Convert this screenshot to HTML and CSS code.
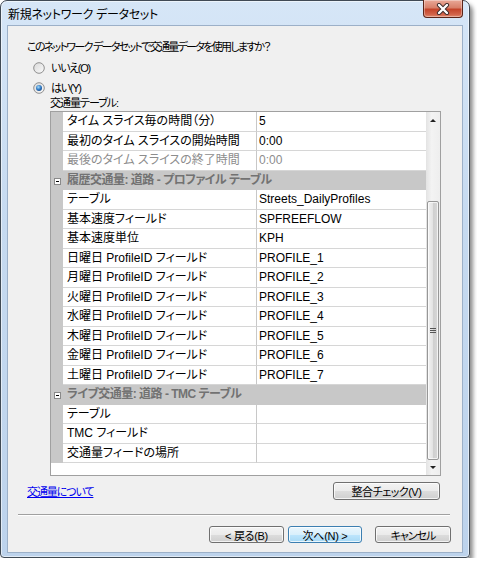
FILE: index.html
```html
<!DOCTYPE html>
<html>
<head>
<meta charset="utf-8">
<link rel="stylesheet" href="styles.css">
</head>
<body>
<div class="window">
  <div class="titlebar">
    <span class="title">新規ネットワーク データセット</span>
    <div class="close">
      <svg width="16" height="12" viewBox="0 0 16 12">
        <path d="M4 2 L12 10 M12 2 L4 10" stroke="#3a2a2a" stroke-width="4.2" stroke-linecap="round"/>
        <path d="M4 2 L12 10 M12 2 L4 10" stroke="#ffffff" stroke-width="2.4" stroke-linecap="round"/>
      </svg>
    </div>
  </div>
  <div class="client">
    <div class="question">このネットワーク データセットで交通量データを使用しますか？</div>
    <div class="radio">
      <svg width="12" height="12" viewBox="0 0 12 12">
        <defs><linearGradient id="rg1" x1="0" y1="0" x2="1" y2="1"><stop offset="0" stop-color="#d8d8d8"/><stop offset="1" stop-color="#fbfbfb"/></linearGradient></defs>
        <circle cx="6" cy="6" r="5.3" fill="url(#rg1)" stroke="#8f8f8f"/>
      </svg>
      <span>いいえ(O)</span>
    </div>
    <div class="radio r2">
      <svg width="12" height="12" viewBox="0 0 12 12">
        <defs>
          <linearGradient id="rg2" x1="0" y1="0" x2="1" y2="1"><stop offset="0" stop-color="#d8d8d8"/><stop offset="1" stop-color="#fbfbfb"/></linearGradient>
          <radialGradient id="dot" cx="0.4" cy="0.35" r="0.7"><stop offset="0" stop-color="#a8dcf8"/><stop offset="0.6" stop-color="#2f79c4"/><stop offset="1" stop-color="#1c4f8e"/></radialGradient>
        </defs>
        <circle cx="6" cy="6" r="5.3" fill="url(#rg2)" stroke="#8f8f8f"/>
        <circle cx="6" cy="6" r="3" fill="url(#dot)"/>
      </svg>
      <span>はい(Y)</span>
    </div>
    <div class="label">交通量テーブル:</div>
    <div class="grid">
      <div class="rows">
        <div class="row"><div class="mg"></div><div class="name">タイム スライス毎の時間（分）</div><div class="value">5</div></div>
        <div class="row"><div class="mg"></div><div class="name">最初のタイム スライスの開始時間</div><div class="value">0:00</div></div>
        <div class="row dis"><div class="mg"></div><div class="name">最後のタイム スライスの終了時間</div><div class="value">0:00</div></div>
        <div class="row cat"><div class="mg"><span class="exp"></span></div><div class="catname">履歴交通量: 道路 - プロファイル テーブル</div></div>
        <div class="row"><div class="mg"></div><div class="name">テーブル</div><div class="value">Streets_DailyProfiles</div></div>
        <div class="row"><div class="mg"></div><div class="name">基本速度フィールド</div><div class="value">SPFREEFLOW</div></div>
        <div class="row"><div class="mg"></div><div class="name">基本速度単位</div><div class="value">KPH</div></div>
        <div class="row"><div class="mg"></div><div class="name">日曜日 ProfileID フィールド</div><div class="value">PROFILE_1</div></div>
        <div class="row"><div class="mg"></div><div class="name">月曜日 ProfileID フィールド</div><div class="value">PROFILE_2</div></div>
        <div class="row"><div class="mg"></div><div class="name">火曜日 ProfileID フィールド</div><div class="value">PROFILE_3</div></div>
        <div class="row"><div class="mg"></div><div class="name">水曜日 ProfileID フィールド</div><div class="value">PROFILE_4</div></div>
        <div class="row"><div class="mg"></div><div class="name">木曜日 ProfileID フィールド</div><div class="value">PROFILE_5</div></div>
        <div class="row"><div class="mg"></div><div class="name">金曜日 ProfileID フィールド</div><div class="value">PROFILE_6</div></div>
        <div class="row"><div class="mg"></div><div class="name">土曜日 ProfileID フィールド</div><div class="value">PROFILE_7</div></div>
        <div class="row cat"><div class="mg"><span class="exp"></span></div><div class="catname">ライブ交通量: 道路 - TMC テーブル</div></div>
        <div class="row"><div class="mg"></div><div class="name">テーブル</div><div class="value"></div></div>
        <div class="row"><div class="mg"></div><div class="name">TMC フィールド</div><div class="value"></div></div>
        <div class="row"><div class="mg"></div><div class="name">交通量フィードの場所</div><div class="value"></div></div>
      </div>
      <div class="scroll">
        <div class="arrow up"><span class="tri-up"></span></div>
        <div class="track t1"></div>
        <div class="thumb"><span class="grip"></span></div>
        <div class="arrow down"><span class="tri-down"></span></div>
      </div>
    </div>
    <div class="midrow">
      <a class="link" href="#">交通量について</a>
      <div class="btn check">整合チェック(V)</div>
    </div>
    <div class="sep"></div>
    <div class="btnrow">
      <div class="btn back">&lt; 戻る(B)</div>
      <div class="btn next default">次へ(N) &gt;</div>
      <div class="btn cancel">キャンセル</div>
    </div>
  </div>
</div>
</body>
</html>
```
FILE: styles.css
```css
html, body {
  margin: 0;
  padding: 0;
  background: #ffffff;
}
body {
  font-family: "Liberation Sans", "Noto Sans CJK JP", sans-serif;
  font-size: 12px;
  font-feature-settings: "palt";
  color: #000;
}
.window {
  width: 470px;
  height: 558px;
  box-sizing: border-box;
  border: 1px solid #404a55;
  border-radius: 7px 7px 4px 4px;
  background: linear-gradient(to bottom, #d6e6f7 0%, #c6daf0 40%, #bdd3ec 100%);
  box-shadow: 3px 4px 4px rgba(0,0,0,0.45), inset 0 0 0 1px rgba(255,255,255,0.55);
  padding: 0 6px 4px 6px;
  display: flex;
  flex-direction: column;
}
.titlebar {
  height: 24px;
  display: flex;
  align-items: center;
  padding-left: 1px;
}
.title {
  font-size: 12px;
  color: #000;
  letter-spacing: -0.3px;
}
.close {
  margin-left: auto;
  align-self: flex-start;
  margin-top: -1px;
  width: 40px;
  height: 18px;
  box-sizing: border-box;
  border: 1px solid #5a2418;
  border-top: none;
  border-radius: 0 0 4px 4px;
  background: linear-gradient(to bottom, #e9a998 0%, #d8806a 45%, #c4442a 55%, #d2644a 85%, #e08a6e 100%);
  box-shadow: inset 0 0 0 1px rgba(255,255,255,0.35);
  display: flex;
  align-items: center;
  justify-content: center;
}
.client {
  height: 528px;
  box-sizing: border-box;
  border: 1px solid #9cb0c8;
  background: #f0f0f0;
  padding-top: 14px;
  display: flex;
  flex-direction: column;
}
.question {
  margin-left: 19px;
  height: 14px;
  line-height: 14px;
  font-size: 11px;
  letter-spacing: -1.7px;
}
.radio {
  margin-left: 25px;
  margin-top: 7px;
  height: 14px;
  display: flex;
  align-items: center;
  gap: 6px;
  line-height: 14px;
}
.radio.r2 {
  margin-top: 6px;
}
.radio span {
  font-size: 11px;
  letter-spacing: -1.3px;
}
.label {
  margin-left: 42px;
  margin-top: 1px;
  height: 14px;
  line-height: 14px;
  font-size: 11px;
  letter-spacing: -1px;
}
.grid {
  margin-left: 42px;
  margin-top: 1px;
  width: 391px;
  height: 365px;
  box-sizing: border-box;
  border: 1px solid #a0a0a0;
  background: #fff;
  display: flex;
}
.rows {
  width: 375px;
  flex: none;
}
.row {
  height: 19.5px;
  display: flex;
  box-sizing: border-box;
  line-height: 18px;
}
.mg {
  width: 12px;
  flex: none;
  background: #c8c8c8;
  display: flex;
  align-items: center;
  justify-content: center;
}
.name {
  width: 194px;
  flex: none;
  box-sizing: border-box;
  padding-left: 4px;
  border-right: 1px solid #c8c8c8;
  border-bottom: 1px solid #d6d6d6;
  white-space: nowrap;
  overflow: hidden;
}
.value {
  flex: 1;
  padding-left: 2px;
  border-bottom: 1px solid #d6d6d6;
  white-space: nowrap;
}
.dis .name, .dis .value {
  color: #8d8d8d;
}
.cat {
  background: #c8c8c8;
}
.catname {
  flex: 1;
  padding-left: 4px;
  font-weight: bold;
  color: #727272;
  letter-spacing: -0.5px;
  white-space: nowrap;
}
.exp {
  width: 7px;
  height: 7px;
  box-sizing: border-box;
  border: 1px solid #8a8a8a;
  background: #fff;
  position: relative;
  margin-top: 2px;
}
.exp::after {
  content: "";
  position: absolute;
  left: 1px;
  top: 2px;
  width: 3px;
  height: 1px;
  background: #000;
}
.scroll {
  width: 14px;
  flex: none;
  display: flex;
  flex-direction: column;
  background: linear-gradient(to right, #e3e3e3, #f3f3f3 40%, #eeeeee);
}
.arrow {
  height: 17px;
  display: flex;
  align-items: center;
  justify-content: center;
}
.arrow.down {
  height: 15px;
}
.tri-up {
  width: 0;
  height: 0;
  border-left: 3px solid transparent;
  border-right: 3px solid transparent;
  border-bottom: 3px solid #222;
}
.tri-down {
  width: 0;
  height: 0;
  border-left: 3px solid transparent;
  border-right: 3px solid transparent;
  border-top: 3px solid #222;
}
.track.t1 {
  height: 72px;
}
.thumb {
  height: 259px;
  margin: 0 1px;
  box-sizing: border-box;
  border: 1px solid #979797;
  border-radius: 2px;
  background: linear-gradient(to right, #f2f2f2, #e2e2e2 50%, #cfcfcf 51%, #d8d8d8);
  box-shadow: inset 0 0 0 1px rgba(255,255,255,0.7);
  display: flex;
  align-items: center;
  justify-content: center;
}
.grip {
  width: 6px;
  height: 5px;
  background: repeating-linear-gradient(to bottom, #555 0px, #555 1px, transparent 1px, transparent 2px);
}
.midrow {
  margin-left: 19px;
  margin-top: 6px;
  width: 413px;
  display: flex;
  align-items: center;
  justify-content: space-between;
}
.link {
  color: #0000ee;
  text-decoration: underline;
  font-size: 11px;
  letter-spacing: -1.1px;
}
.btn {
  height: 17px;
  box-sizing: border-box;
  border: 1px solid #707070;
  border-radius: 3px;
  background: linear-gradient(to bottom, #f3f3f3 0%, #ebebeb 50%, #dddddd 51%, #cfcfcf 100%);
  box-shadow: inset 0 0 0 1px rgba(255,255,255,0.75);
  display: flex;
  align-items: center;
  justify-content: center;
  white-space: nowrap;
  font-size: 11px;
  letter-spacing: -0.3px;
}
.check {
  width: 107px;
  height: 18px;
  letter-spacing: -0.5px;
}
.sep {
  margin-left: 10px;
  margin-top: 14px;
  width: 432px;
  height: 1px;
  background: #a0a0a0;
  border-bottom: 1px solid #ffffff;
}
.btnrow {
  margin-top: 10px;
  margin-right: 11px;
  display: flex;
  justify-content: flex-end;
}
.back {
  width: 75px;
}
.next {
  width: 74px;
  margin-left: 4px;
}
.cancel {
  width: 76px;
  margin-left: 13px;
  letter-spacing: -1px;
}
.btn.default {
  border-color: #3c7fb1;
  background: linear-gradient(to bottom, #eaf6fd 0%, #d9f0fc 50%, #bee6fd 51%, #a7d9f5 100%);
}
```
